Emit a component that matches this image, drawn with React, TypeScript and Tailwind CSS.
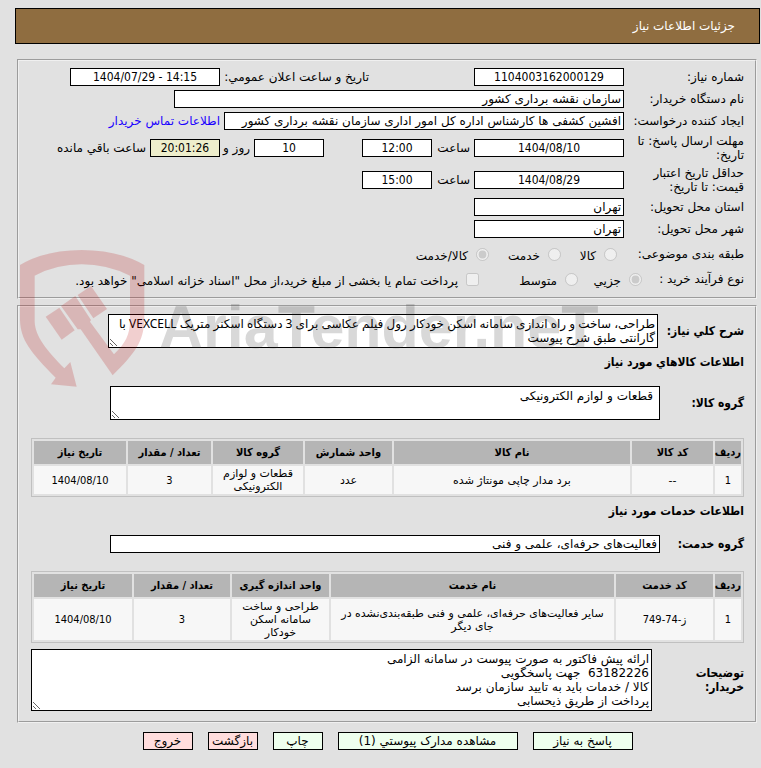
import type { ReactNode } from "react";

const field =
  "h-[18px] min-w-0 border border-black bg-white px-[2px] text-[12px] leading-[14px]";
const numeric = field + " text-center font-['DejaVu_Sans_Condensed',sans-serif]";
const area =
  "block border border-black bg-white p-[2px] text-[12px] leading-[14px] resize overflow-hidden";
const panel =
  "flex flex-col border-2 [border-style:groove] border-[#f0f0f0] px-[11px] pt-[7px]";
const bold = "font-bold font-['DejaVu_Sans_Condensed',sans-serif]";

const Row = ({
  id,
  label,
  children,
}: {
  id?: string;
  label: string;
  children: ReactNode;
}) => (
  <div className="flex items-center">
    <label htmlFor={id} className="w-[120px] shrink-0 pl-1">
      {label}
    </label>
    {children}
  </div>
);

const Choice = ({
  type = "radio",
  name,
  label,
  checked = false,
  className = "",
}: {
  type?: string;
  name: string;
  label: string;
  checked?: boolean;
  className?: string;
}) => (
  <label className={"flex items-center gap-2 whitespace-nowrap " + className}>
    <input
      type={type}
      name={name}
      defaultChecked={checked}
      disabled
      className="h-[13px] w-[13px]"
    />
    <span className="pt-1">{label}</span>
  </label>
);

const Grid = ({
  heads,
  widths,
  cells,
}: {
  heads: string[];
  widths: string[];
  cells: string[];
}) => (
  <table className="w-full table-fixed border-separate border-spacing-[2px] border border-[#c0c0c0] text-center text-[11px] leading-[13px]">
    <thead>
      <tr>
        {heads.map((h, i) => (
          <th
            key={h}
            className={
              "h-[23px] whitespace-nowrap bg-[#b5b5b5] font-bold font-['DejaVu_Sans_Condensed',sans-serif] " +
              widths[i]
            }
          >
            {h}
          </th>
        ))}
      </tr>
    </thead>
    <tbody>
      <tr>
        {cells.map((c, i) => (
          <td
            key={i}
            className={
              "bg-[#f7f7f7] py-px " +
              (/\d/.test(c) ? "font-['DejaVu_Sans_Condensed',sans-serif]" : "px-1")
            }
          >
            {c}
          </td>
        ))}
      </tr>
    </tbody>
  </table>
);

const Watermark = () => (
  <svg
    aria-hidden="true"
    viewBox="0 0 600 155"
    className="pointer-events-none absolute top-[240px] left-[10px] h-[155px] w-[600px]"
  >
    <g fill="#b40000" fillOpacity="0.19" transform="scale(0.3333)">
      <path d="M30 75Q105 30 215 30Q325 30 403 75V240C401 305 375 340 308 406L212 268H203L153 198L196 168L243 240L240 245L312 343C346 310 360 285 360 240V107Q290 73 215 73Q140 73 74 107V245C76 290 110 330 163 385L181 366L200 440L123 433L137 413C60 335 32 300 30 240Z" />
      <path d="M107 230L148 203L194 271L155 299Z" />
      <path d="M203 165L243 138L291 207L250 235Z" />
    </g>
    <text
      x="149"
      y="108"
      direction="ltr"
      fill="#303030"
      fillOpacity="0.19"
      className="font-['Liberation_Sans',sans-serif] text-[61px] font-bold"
    >
      AriaTender.neT
    </text>
  </svg>
);

const buttons = [
  { label: "پاسخ به نیاز", className: "w-[100px] bg-[#eeffee]" },
  { label: "مشاهده مدارک پیوستي (1)", className: "w-[180px] bg-[#eeffee]" },
  { label: "چاپ", className: "w-[50px] bg-[#eeffee]" },
  { label: "بازگشت", className: "w-[50px] bg-[#ffdddd]" },
  { label: "خروج", className: "w-[50px] bg-[#ffdddd]" },
];

export default function App() {
  return (
    <div
      dir="rtl"
      className="relative min-h-screen bg-[#e1e1e1] pt-2 pr-px pb-4 pl-[15px] font-['DejaVu_Sans',sans-serif] text-[12px] leading-[14px] text-black"
    >
      <header className="flex h-9 items-center border border-black bg-[#8f6d40] px-6 text-white">
        <h1>جزئیات اطلاعات نیاز</h1>
      </header>

      <main className="mt-[15px] mr-[3px] ml-[2px] flex flex-col gap-[6px]">
        <fieldset className={panel + " gap-1 pb-[9px]"}>
          <Row id="number" label="شماره نیاز:">
            <input id="number" dir="ltr" readOnly defaultValue="1104003162000129" className={numeric + " w-[150px]"} />
            <label htmlFor="announce" className="mr-[105px] w-[149px] whitespace-nowrap">
              تاریخ و ساعت اعلان عمومي:
            </label>
            <input id="announce" dir="ltr" readOnly defaultValue="1404/07/29 - 14:15" className={numeric + " w-[150px]"} />
          </Row>
          <Row id="org" label="نام دستگاه خریدار:">
            <input id="org" readOnly defaultValue="سازمان نقشه برداری کشور" className={field + " w-[450px]"} />
          </Row>
          <Row id="creator" label="ایجاد کننده درخواست:">
            <input id="creator" readOnly defaultValue="افشین کشفی ها کارشناس اداره کل امور اداری سازمان نقشه برداری کشور" className={field + " w-[400px]"} />
            <a href="#contact" className="mr-1 whitespace-nowrap text-[#1a00ff]">
              اطلاعات تماس خریدار
            </a>
          </Row>
          <Row id="deadline" label="مهلت ارسال پاسخ: تا تاریخ:">
            <input id="deadline" dir="ltr" readOnly defaultValue="1404/08/10" className={numeric + " w-[150px]"} />
            <label htmlFor="deadline-hour" className="w-[42px] pr-1">ساعت</label>
            <input id="deadline-hour" dir="ltr" readOnly defaultValue="12:00" className={numeric + " w-[70px]"} />
            <input id="days" dir="ltr" readOnly defaultValue="10" className={numeric + " mr-[38px] w-[70px]"} />
            <label htmlFor="days" className="w-[34px] whitespace-nowrap pr-1">روز و</label>
            <input id="remaining" dir="ltr" readOnly defaultValue="20:01:26" className={numeric.replace("bg-white", "bg-[#eeeecc]") + " w-[70px]"} />
            <label htmlFor="remaining" className="whitespace-nowrap pr-1">ساعت باقي مانده</label>
          </Row>
          <Row id="validity" label="حداقل تاریخ اعتبار قیمت: تا تاریخ:">
            <input id="validity" dir="ltr" readOnly defaultValue="1404/08/29" className={numeric + " w-[150px]"} />
            <label htmlFor="validity-hour" className="w-[42px] pr-1">ساعت</label>
            <input id="validity-hour" dir="ltr" readOnly defaultValue="15:00" className={numeric + " w-[70px]"} />
          </Row>
          <Row id="province" label="استان محل تحویل:">
            <input id="province" readOnly defaultValue="تهران" className={field + " w-[150px]"} />
          </Row>
          <Row id="city" label="شهر محل تحویل:">
            <input id="city" readOnly defaultValue="تهران" className={field + " w-[150px]"} />
          </Row>
          <div className="flex h-6 items-center">
            <span className="w-[127px] shrink-0">طبقه بندی موضوعی:</span>
            <Choice name="category" label="کالا" className="w-[56px]" />
            <Choice name="category" label="خدمت" className="w-[72px]" />
            <Choice name="category" label="کالا/خدمت" checked />
          </div>
          <div className="flex h-[18px] items-center">
            <span className="w-[102px] shrink-0">نوع فرآیند خرید :</span>
            <Choice name="process" label="جزیي" checked className="w-[64px]" />
            <Choice name="process" label="متوسط" className="w-[99px]" />
            <Choice
              type="checkbox"
              name="treasury"
              label={'پرداخت تمام یا بخشی از مبلغ خرید،از محل "اسناد خزانه اسلامی" خواهد بود.'}
            />
          </div>
        </fieldset>

        <fieldset className={panel + " pb-[10px] pl-3"}>
          <div className="flex items-center">
            <label htmlFor="summary" className={"w-[86px] shrink-0 " + bold}>شرح کلي نیاز:</label>
            <textarea
              id="summary"
              rows={2}
              readOnly
              defaultValue="طراحی، ساخت و راه اندازی سامانه اسکن خودکار رول فیلم عکاسی برای 3 دستگاه اسکنر متریک VEXCELL با گارانتی طبق شرح پیوست"
              className={area + " w-[550px] font-['Noto_Sans','DejaVu_Sans',sans-serif]"}
            />
          </div>
          <h2 className={"mt-[7px] mb-[17px] " + bold}>اطلاعات کالاهاي مورد نیاز</h2>
          <div className="mb-[18px] flex items-center">
            <label htmlFor="goods" className={"w-[84px] shrink-0 " + bold}>گروه کالا:</label>
            <textarea id="goods" rows={2} readOnly defaultValue="قطعات و لوازم الکترونیکی" className={area + " w-[550px] pr-[6px]"} />
          </div>
          <Grid
            heads={["ردیف", "کد کالا", "نام کالا", "واحد شمارش", "گروه کالا", "تعداد / مقدار", "تاریخ نیاز"]}
            widths={["w-[26px]", "w-[81px]", "", "w-[87px]", "w-[90px]", "w-[83px]", "w-[92px]"]}
            cells={["1", "--", "برد مدار چاپی مونتاژ شده", "عدد", "قطعات و لوازم الکترونیکی", "3", "1404/08/10"]}
          />
          <h2 className={"mt-[7px] mb-[17px] " + bold}>اطلاعات خدمات مورد نیاز</h2>
          <div className="mb-[18px] flex items-center">
            <label htmlFor="service" className={"w-[84px] shrink-0 " + bold}>گروه خدمت:</label>
            <input id="service" readOnly defaultValue="فعالیت‌های حرفه‌ای، علمی و فنی" className={field + " w-[550px]"} />
          </div>
          <Grid
            heads={["ردیف", "کد خدمت", "نام خدمت", "واحد اندازه گیری", "تعداد / مقدار", "تاریخ نیاز"]}
            widths={["w-[26px]", "w-[97px]", "", "w-[97px]", "w-[96px]", "w-[98px]"]}
            cells={["1", "ز-74-749", "سایر فعالیت‌های حرفه‌ای، علمی و فنی طبقه‌بندی‌نشده در جای دیگر", "طراحی و ساخت سامانه اسکن خودکار", "3", "1404/08/10"]}
          />
          <div className="mt-[6px] flex items-center">
            <label htmlFor="notes" className={"w-[92px] shrink-0 pl-6 " + bold}>توضیحات خریدار:</label>
            <textarea
              id="notes"
              rows={4}
              readOnly
              defaultValue={"ارائه پیش فاکتور به صورت پیوست در سامانه الزامی\n63182226  جهت پاسخگویی\nکالا / خدمات باید به تایید سازمان برسد\nپرداخت از طریق ذیحسابی"}
              className={area + " min-w-0 flex-1"}
            />
          </div>
        </fieldset>
      </main>

      <div className="mt-[9px] flex justify-center gap-[15px]">
        {buttons.map((b) => (
          <button
            key={b.label}
            type="button"
            className={"h-[18px] whitespace-nowrap border border-black text-[12px] leading-[14px] " + b.className}
          >
            {b.label}
          </button>
        ))}
      </div>

      <Watermark />
    </div>
  );
}
